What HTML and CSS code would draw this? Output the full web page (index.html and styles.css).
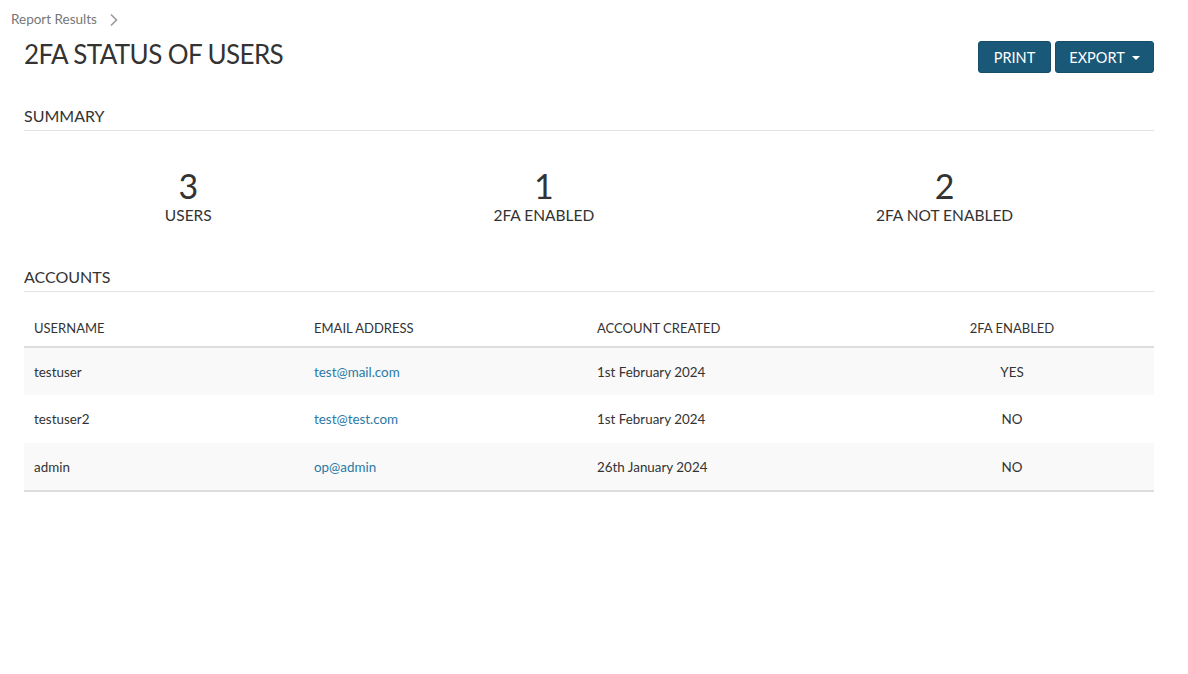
FILE: index.html
```html
<!DOCTYPE html>
<html>
<head>
<meta charset="utf-8">
<link rel="stylesheet" href="styles.css">
</head>
<body>
<div class="page">
  <nav class="crumbs">
    <span class="crumb">Report Results</span>
    <svg class="chev" width="10" height="14" viewBox="0 0 10 14"><path d="M2 1.5 L7.5 7 L2 12.5" fill="none" stroke="#999" stroke-width="1.6"/></svg>
  </nav>
  <header class="head">
    <h1 class="title">2FA STATUS OF USERS</h1>
    <div class="actions">
      <button class="btn btn-print">PRINT</button>
      <button class="btn btn-export">EXPORT <span class="caret"></span></button>
    </div>
  </header>

  <section class="section">
    <h2 class="section-title">SUMMARY</h2>
    <div class="stats">
      <div class="stat"><div class="num">3</div><div class="label">USERS</div></div>
      <div class="stat"><div class="num">1</div><div class="label">2FA ENABLED</div></div>
      <div class="stat"><div class="num">2</div><div class="label">2FA NOT ENABLED</div></div>
    </div>
  </section>

  <section class="section">
    <h2 class="section-title">ACCOUNTS</h2>
    <table class="table">
      <colgroup><col class="c1"><col class="c2"><col class="c3"><col class="c4"></colgroup>
      <thead>
        <tr><th>USERNAME</th><th>EMAIL ADDRESS</th><th>ACCOUNT CREATED</th><th class="center">2FA ENABLED</th></tr>
      </thead>
      <tbody>
        <tr><td>testuser</td><td><a href="#">test@mail.com</a></td><td>1st February 2024</td><td class="center">YES</td></tr>
        <tr><td>testuser2</td><td><a href="#">test@test.com</a></td><td>1st February 2024</td><td class="center">NO</td></tr>
        <tr><td>admin</td><td><a href="#">op@admin</a></td><td>26th January 2024</td><td class="center">NO</td></tr>
      </tbody>
    </table>
  </section>
</div>
</body>
</html>
```
FILE: styles.css
```css
* { box-sizing: border-box; }
html, body { margin: 0; padding: 0; background: #fff; }
body {
  font-family: "Lato", "Noto Sans", sans-serif;
  color: #333;
}
.page { padding: 0 34px 0 24px; }
.crumbs {
  display: flex;
  align-items: center;
  gap: 12px;
  height: 38px;
  margin-left: -13px;
}
.crumb { font-size: 13.5px; color: #777; }
.chev { margin-top: 1px; }
.head {
  display: flex;
  justify-content: space-between;
  align-items: flex-start;
}
.title {
  margin: 0;
  font-size: 26px;
  font-weight: 400;
  letter-spacing: -0.6px;
  color: #333;
  line-height: 32px;
}
.actions { display: flex; gap: 4px; margin-top: 3px; }
.btn {
  font-family: inherit;
  background: #1a5878;
  color: #fff;
  border: 1px solid #164d6a;
  border-radius: 3px;
  height: 32px;
  padding: 0 15px;
  font-size: 14.5px;
  cursor: pointer;
}
.btn-print { width: 73px; padding: 0; }
.btn-export { width: 99px; padding: 0; display: flex; align-items: center; justify-content: center; gap: 7px; }
.caret {
  width: 0; height: 0;
  border-left: 4px solid transparent;
  border-right: 4px solid transparent;
  border-top: 4px solid #fff;
  margin-top: 2px;
}
.section { margin-top: 33px; }
.section + .section { margin-top: 42px; }
.section-title {
  margin: 0;
  font-size: 16px;
  font-weight: 400;
  color: #333;
  padding-bottom: 4px;
  border-bottom: 1px solid #e3e3e3;
  line-height: 20px;
}
.stats {
  display: flex;
  justify-content: space-around;
  padding-top: 37px;
}
.stat { text-align: center; }
.num { font-size: 34px; line-height: 36px; color: #333; }
.label { font-size: 15.5px; line-height: 20px; margin-top: 1px; }
.table {
  width: 100%;
  border-collapse: collapse;
  margin-top: 19px;
  font-size: 13.4px;
}
.c1 { width: 280px; }
.c2 { width: 283px; }
.c3 { width: 283px; }
.table th {
  text-align: left;
  font-weight: 400;
  font-size: 13px;
  padding: 7px 10px 8px;
  border-bottom: 2px solid #ddd;
  line-height: 20px;
}
.table td {
  padding: 0 10px;
  height: 48px;
  line-height: 20px;
}
.table tbody tr:nth-child(odd) { background: #f9f9f9; }
.table tbody tr:last-child td { border-bottom: 2px solid #ddd; }
.table .center { text-align: center; }
.table a { color: #2a79a6; text-decoration: none; }
```
